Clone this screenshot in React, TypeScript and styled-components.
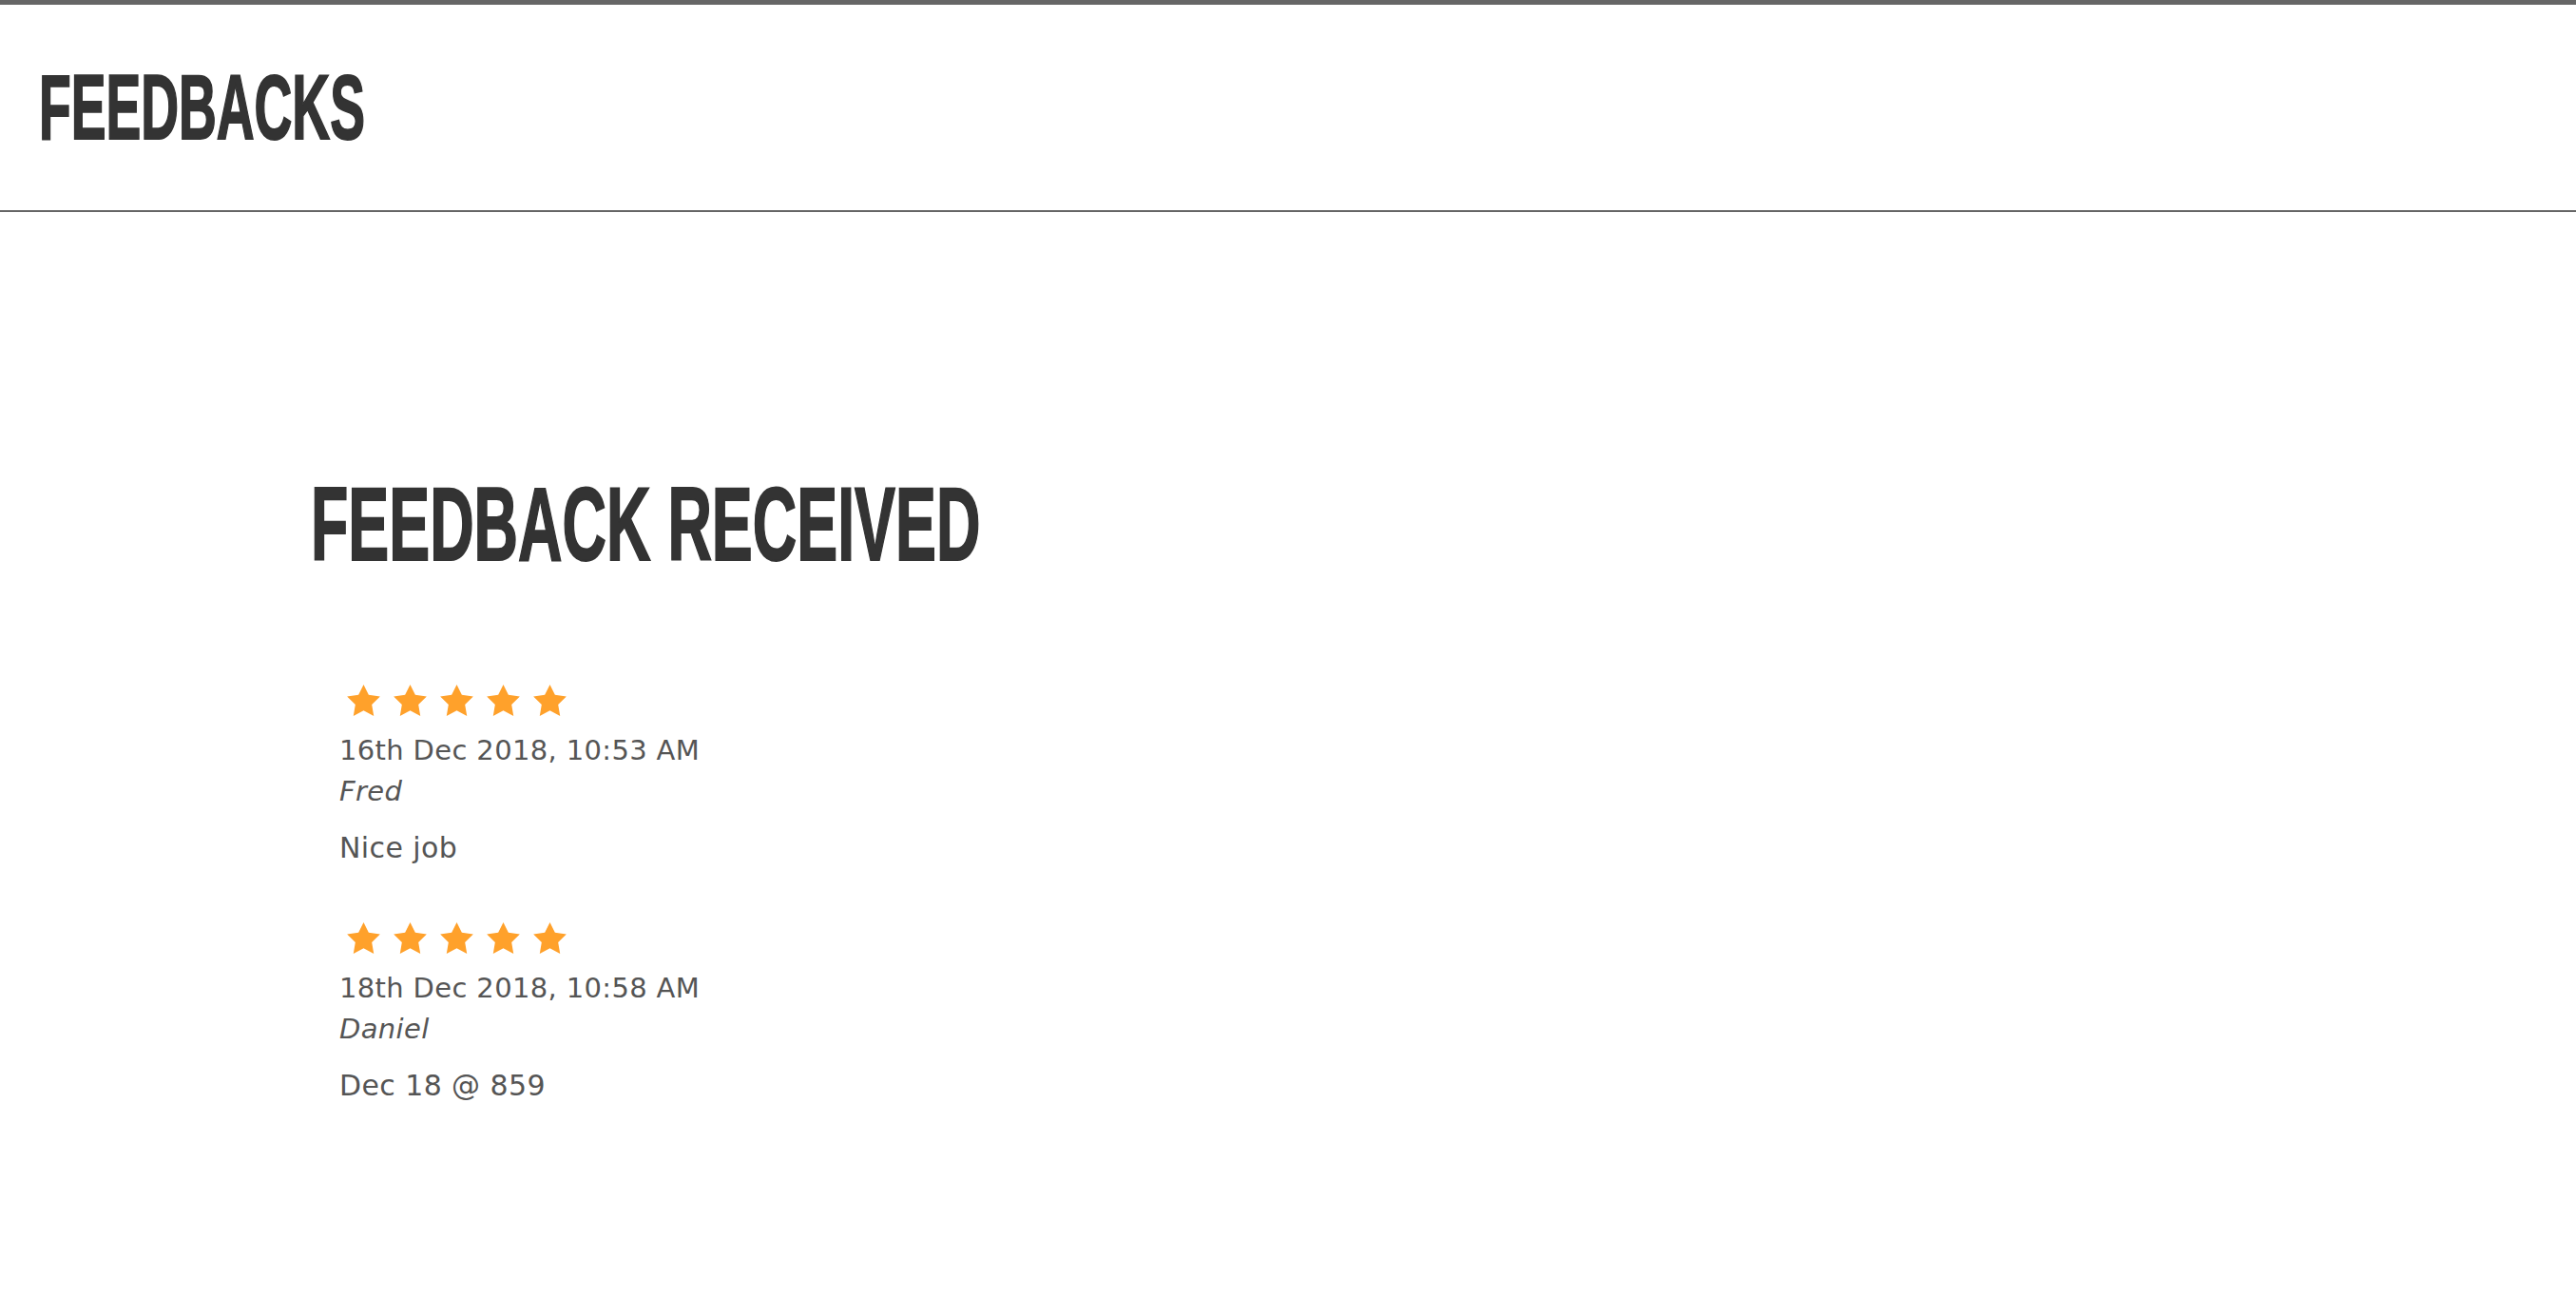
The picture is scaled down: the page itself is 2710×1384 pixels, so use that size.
import styled, { createGlobalStyle } from "styled-components";

const GlobalStyle = createGlobalStyle`
  html, body {
    margin: 0;
    padding: 0;
    background: #fff;
  }
  body {
    font-family: "DejaVu Sans", Verdana, sans-serif;
    color: #555;
  }
`;

const Header = styled.header`
  border-top: 5px solid #666;
  border-bottom: 2px solid #666;
  padding: 60px 41px 60px;
`;

// condensed display heading: bold sans squeezed horizontally
const Title = styled.h1<{ $size: number; $squeeze: number }>`
  margin: 0;
  font-family: "Liberation Sans", Arial, sans-serif;
  font-weight: 700;
  font-size: ${(p) => p.$size}px;
  line-height: 1;
  color: #333;
  white-space: nowrap;

  span {
    display: inline-block;
    -webkit-text-stroke: 2px #333;
    transform: scaleX(${(p) => p.$squeeze});
    transform-origin: left center;
  }
`;

const Main = styled.main`
  padding: 273px 0 0 327px;
`;

const FeedbackList = styled.div`
  display: flex;
  flex-direction: column;
  gap: 56px;
  margin-top: 113px;
  padding-left: 30px;
`;

const Item = styled.div`
  display: flex;
  flex-direction: column;
`;

const Stars = styled.div`
  display: flex;
  gap: 14px;
  padding-left: 8px;
  height: 34px;
  align-items: center;
`;

const Meta = styled.div<{ $italic?: boolean }>`
  font-size: 29px;
  line-height: 43px;
  letter-spacing: 0.35px;
  font-style: ${(p) => (p.$italic ? "italic" : "normal")};
`;

const DateLine = styled(Meta)`
  margin-top: 15px;
`;

const Comment = styled.p`
  margin: 16px 0 0;
  font-size: 30px;
  line-height: 43px;
  letter-spacing: 0.4px;
`;

const Star = () => (
  <svg width="35" height="33" viewBox="2 1.5 20 19.02" aria-hidden="true">
    <path
      fill="#ffa12b"
      d="M12 1.5l3.09 6.26L22 8.77l-5 4.87 1.18 6.88L12 17.27l-6.18 3.25L7 13.64 2 8.77l6.91-1.01L12 1.5z"
    />
  </svg>
);

const feedbacks = [
  { date: "16th Dec 2018, 10:53 AM", name: "Fred", text: "Nice job", rating: 5 },
  { date: "18th Dec 2018, 10:58 AM", name: "Daniel", text: "Dec 18 @ 859", rating: 5 },
];

function App() {
  return (
    <>
      <GlobalStyle />
      <Header>
        <Title $size={96} $squeeze={0.574}>
          <span>FEEDBACKS</span>
        </Title>
      </Header>
      <Main>
        <Title as="h2" $size={110} $squeeze={0.585}>
          <span>FEEDBACK RECEIVED</span>
        </Title>
        <FeedbackList>
          {feedbacks.map((f) => (
            <Item key={f.date}>
              <Stars>
                {Array.from({ length: f.rating }).map((_, i) => (
                  <Star key={i} />
                ))}
              </Stars>
              <DateLine>{f.date}</DateLine>
              <Meta $italic>{f.name}</Meta>
              <Comment>{f.text}</Comment>
            </Item>
          ))}
        </FeedbackList>
      </Main>
    </>
  );
}

export default App;
